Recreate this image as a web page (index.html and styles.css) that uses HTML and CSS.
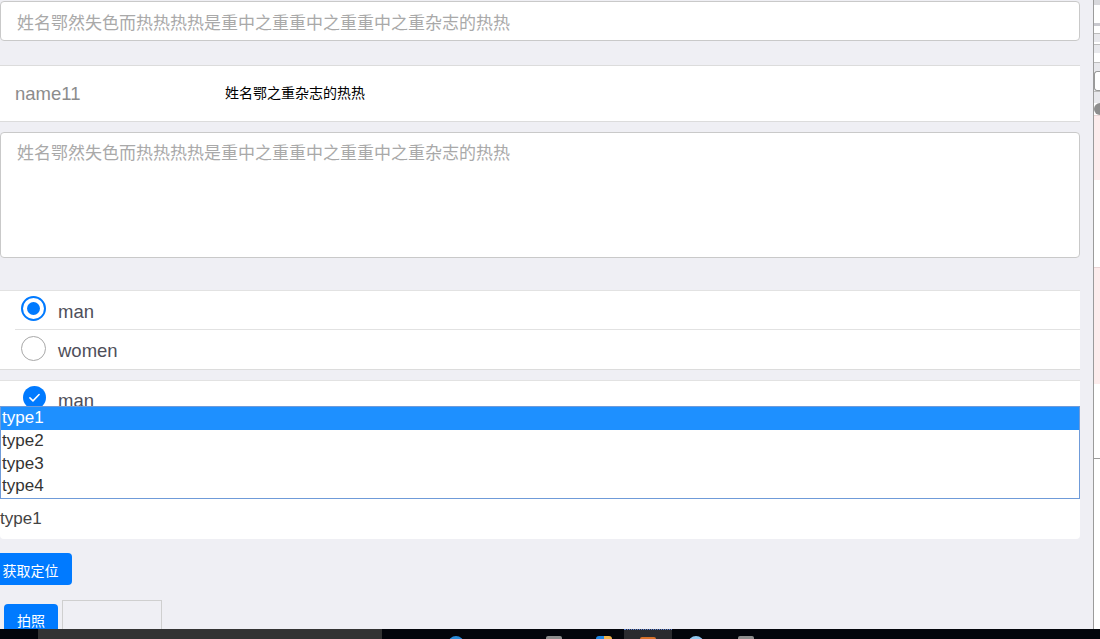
FILE: index.html
```html
<!DOCTYPE html>
<html lang="zh">
<head>
<meta charset="utf-8">
<title>Form</title>
<link rel="stylesheet" href="styles.css">
</head>
<body>
<div class="page">
  <main class="main">
    <div class="input-box">
      <input class="text-input" type="text" placeholder="姓名鄂然失色而热热热热是重中之重重中之重重中之重杂志的热热">
    </div>

    <div class="cell">
      <span class="cell-label">name11</span>
      <span class="cell-value">姓名鄂之重杂志的热热</span>
    </div>

    <textarea class="textarea" placeholder="姓名鄂然失色而热热热热是重中之重重中之重重中之重杂志的热热"></textarea>

    <ul class="radio-list">
      <li class="radio-item">
        <span class="radio radio-on"><span class="radio-dot"></span></span>
        <span class="opt-label">man</span>
      </li>
      <li class="radio-item">
        <span class="radio"></span>
        <span class="opt-label">women</span>
      </li>
    </ul>

    <div class="check-card">
      <div class="check-row">
        <span class="check-icon">
          <svg viewBox="0 0 24 24" width="23" height="23"><circle cx="12" cy="12" r="12" fill="#007aff"/><path d="M7.2 12.4l3.2 3.1 6.4-6.6" fill="none" stroke="#fff" stroke-width="1.6" stroke-linecap="round" stroke-linejoin="round"/></svg>
        </span>
        <span class="opt-label">man</span>
      </div>
      <div class="listbox" role="listbox">
        <div class="option option-selected">type1</div>
        <div class="option">type2</div>
        <div class="option">type3</div>
        <div class="option">type4</div>
      </div>
      <div class="select-value">type1</div>
    </div>

    <div class="loc-row"><button class="btn btn-loc">获取定位</button></div>

    <div class="photo-row">
      <button class="btn btn-photo">拍照</button>
      <div class="photo-box"></div>
    </div>
  </main>

  <aside class="side">
    <div class="side-gap"></div>
    <div class="side-line"></div>
    <div class="side-panel">
      <div class="sp sp-gray" style="height:5px"></div>
      <div class="sp sp-white" style="height:18px"></div>
      <div class="sp sp-mid" style="height:3px"></div>
      <div class="sp sp-white" style="height:7px"></div>
      <div class="sp sp-dot" style="height:9px"></div>
      <div class="sp sp-white" style="height:2px"></div>
      <div class="sp sp-dot" style="height:9px"></div>
      <div class="sp sp-white" style="height:9px"></div>
      <div class="sp sp-dot" style="height:9px"></div>
      <div class="sp sp-box" style="height:20px"></div>
      <div class="sp sp-dot" style="height:12px"></div>
      <div class="sp sp-round" style="height:12px"></div>
      <div class="sp sp-pink" style="height:65px"></div>
      <div class="sp sp-white" style="height:87px"></div>
      <div class="sp sp-pink" style="height:117px"></div>
      <div class="sp sp-white" style="height:74px"></div>
      <div class="sp sp-rule" style="height:10px"></div>
    </div>
  </aside>
</div>

<div class="taskbar">
  <div class="tb-start"></div>
  <div class="tb-search"></div>
  <div class="tb-icons">
    <span class="tb-icon tb-blue" style="margin-left:66px"></span>
    <span class="tb-icon tb-gray" style="margin-left:82px"></span>
    <span class="tb-icon tb-duo" style="margin-left:34px"></span>
    <span class="tb-active"><span class="tb-icon tb-orange"></span></span>
    <span class="tb-icon tb-lblue" style="margin-left:16px"></span>
    <span class="tb-icon tb-gray" style="margin-left:34px"></span>
  </div>
</div>
</body>
</html>
```

FILE: styles.css
```css
* { box-sizing: border-box; }

html, body {
  margin: 0;
  padding: 0;
  height: 639px;
  overflow: hidden;
  background: #efeff4;
  font-family: "Liberation Sans", Arial, "Noto Sans CJK SC", sans-serif;
}

.page {
  display: flex;
  width: 1100px;
  height: 639px;
}

.main {
  width: 1080px;
  flex: none;
  padding-top: 1px;
}

/* text input */
.input-box { height: 40px; }
.text-input {
  width: 1080px;
  height: 40px;
  border: 1px solid #c9c9c9;
  border-radius: 4px;
  background: #fff;
  padding: 0 16px;
  font-family: "Noto Sans CJK SC", sans-serif;
  font-size: 17px;
  color: #333;
  outline: none;
}
.text-input::placeholder,
.textarea::placeholder { color: #a9a9a9; }

/* cell */
.cell {
  margin-top: 24px;
  height: 57px;
  background: #fff;
  border-top: 1px solid #dcdcdc;
  border-bottom: 1px solid #dcdcdc;
  display: flex;
  align-items: center;
}
.cell-label {
  width: 225px;
  padding-left: 15px;
  font-size: 18.5px;
  color: #8c8c8c;
}
.cell-value {
  font-family: "Noto Sans CJK SC", sans-serif;
  font-size: 14px;
  color: #000;
  margin-top: -4px;
}

/* textarea */
.textarea {
  display: block;
  margin-top: 10px;
  width: 1080px;
  height: 126px;
  border: 1px solid #c9c9c9;
  border-radius: 4px;
  background: #fff;
  padding: 7px 16px;
  font-family: "Noto Sans CJK SC", sans-serif;
  font-size: 17px;
  line-height: 24px;
  resize: none;
  outline: none;
}

/* radio list */
.radio-list {
  list-style: none;
  margin: 32px 0 0;
  padding: 0;
  background: #fff;
  border-top: 1px solid #e2e2e2;
  border-bottom: 1px solid #dcdcdc;
}
.radio-item {
  height: 38px;
  display: flex;
  align-items: center;
  padding-left: 21px;
}
.radio-item + .radio-item {
  height: 40px;
  border-top: 1px solid #e2e2e2;
  margin-left: 15px;
  padding-left: 6px;
}
.radio {
  width: 25px;
  height: 25px;
  border-radius: 50%;
  border: 1px solid #a8a8a8;
  display: flex;
  align-items: center;
  justify-content: center;
  margin-top: -3px;
}
.radio-on { border: 2px solid #007aff; }
.radio-dot {
  width: 13px;
  height: 13px;
  border-radius: 50%;
  background: #007aff;
}
.opt-label {
  margin-left: 12px;
  font-size: 18.5px;
  color: #4f4f5a;
}
.radio-item .opt-label { padding-top: 3px; }

/* checkbox + select card */
.check-card {
  margin-top: 10px;
  background: #fff;
  border-top: 1px solid #e2e2e2;
  border-radius: 0 0 4px 4px;
}
.check-row {
  height: 25px;
  overflow: hidden;
  display: flex;
  align-items: flex-start;
  padding: 5px 0 0 23px;
}
.check-icon { display: block; height: 23px; }
.check-icon svg { display: block; }
.check-row .opt-label { margin-left: 12px; margin-top: 3px; line-height: 24px; }

.listbox {
  border: 1px solid #6f9bd9;
  height: 93px;
  background: #fff;
  overflow: hidden;
}
.option {
  height: 22.75px;
  line-height: 22.75px;
  font-size: 17px;
  color: #333;
  padding-left: 1px;
}
.option-selected {
  background: #1e90ff;
  color: #fff;
}
.select-value {
  height: 40px;
  line-height: 40px;
  font-size: 17px;
  color: #444;
}

/* buttons */
.loc-row { margin-top: 14px; height: 32px; }
.btn {
  border: none;
  border-radius: 4px;
  background: #007aff;
  color: #fff;
  font-family: "Noto Sans CJK SC", sans-serif;
  font-size: 14px;
  padding: 0;
  height: 32px;
  cursor: pointer;
}
.btn-loc {
  width: 83px;
  margin-left: -11px;
  padding-top: 1px;
}
.photo-row {
  margin-top: 15px;
  display: flex;
  align-items: flex-start;
}
.btn-photo {
  width: 54px;
  margin-left: 4px;
  margin-top: 4px;
  font-size: 14px;
}
.photo-box {
  width: 100px;
  height: 100px;
  margin-left: 4px;
  border: 1px solid #cfcfcf;
}

/* right side */
.side {
  flex: none;
  width: 20px;
  display: flex;
}
.side-gap { width: 13px; background: #efeff4; }
.side-line { width: 1px; background: #9b9b9b; }
.side-panel {
  width: 6px;
  display: flex;
  flex-direction: column;
  background: #fff;
}
.sp { flex: none; }
.sp-gray { background: #d8d8dc; }
.sp-white { background: #fff; }
.sp-mid { background: #c9c9cf; }
.sp-dot { background: #e8e8ec; border-top: 1px solid #bdbdbd; }
.sp-box { background: #fff; border: 1px solid #9a9a9a; border-right: none; border-radius: 3px 0 0 3px; }
.sp-round { background: #8e8e8e; border-radius: 6px 0 0 6px; }
.sp-pink { background: #fdecec; border-top: 1px solid #e9d5d5; }
.sp-rule { border-top: 1px solid #9b9b9b; background: #fff; }

/* taskbar */
.taskbar {
  position: fixed;
  left: 0;
  bottom: 0;
  width: 1100px;
  height: 10px;
  background: #03050b;
  display: flex;
  overflow: hidden;
}
.tb-start { width: 38px; }
.tb-search { width: 344px; background: #333333; }
.tb-icons { display: flex; align-items: flex-start; }
.tb-icon {
  display: block;
  width: 16px;
  height: 16px;
  margin-top: 7px;
  border-radius: 50%;
}
.tb-blue { background: #2a8ad8; }
.tb-gray { background: #8d8d8d; border-radius: 2px; }
.tb-duo { background: linear-gradient(90deg, #1f88e5 50%, #f2b44b 50%); border-radius: 3px; }
.tb-lblue { background: #8fc6ee; }
.tb-orange { background: #d9712a; border-radius: 2px; margin: 7px auto 0; }
.tb-active {
  display: block;
  width: 48px;
  height: 10px;
  margin-left: 12px;
  background: #2b2b2f;
  border-top: 1px dotted #5a7fd0;
}
```
